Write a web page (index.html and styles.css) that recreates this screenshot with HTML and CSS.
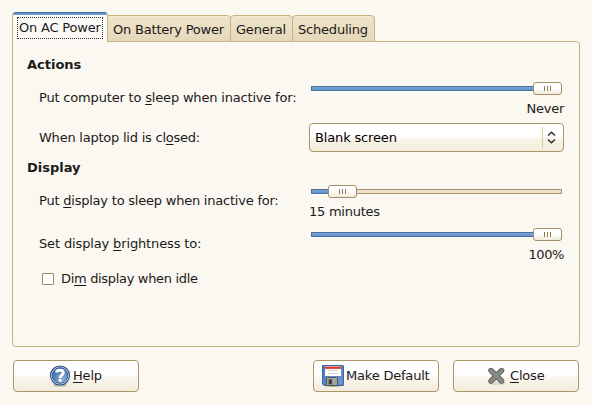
FILE: index.html
```html
<!DOCTYPE html>
<html lang="en">
<head>
<meta charset="utf-8">
<title>Power Management Preferences</title>
<link rel="stylesheet" href="styles.css">
</head>
<body>
<main class="dialog">
  <nav class="tabs">
    <div class="tab tab-active"><span class="focus">On AC Power</span></div>
    <div class="tab tab-battery">On Battery Power</div>
    <div class="tab tab-general">General</div>
    <div class="tab tab-scheduling">Scheduling</div>
  </nav>
  <section class="panel">
    <h2>Actions</h2>
    <div class="row row-sleep">
      <label>Put computer to <u>s</u>leep when inactive for:</label>
      <div class="scale">
        <div class="slider"><div class="fill" style="width:222px"></div><div class="thumb"><i></i><i></i><i></i></div><div class="rest"></div></div>
        <div class="value value-end">Never</div>
      </div>
    </div>
    <div class="row row-lid">
      <label>When laptop lid is cl<u>o</u>sed:</label>
      <div class="combo"><span class="combo-text">Blank screen</span><span class="combo-arrows"><svg width="9" height="13" viewBox="0 0 9 13"><path d="M1 4.6 4.5 1.3 8 4.6M1 8.4 4.5 11.7 8 8.4" fill="none" stroke="#2c2c2c" stroke-width="1.4"/></svg></span></div>
    </div>
    <h2 class="second">Display</h2>
    <div class="row row-display">
      <label>Put <u>d</u>isplay to sleep when inactive for:</label>
      <div class="scale">
        <div class="slider"><div class="fill" style="width:17px"></div><div class="thumb"><i></i><i></i><i></i></div><div class="rest"></div></div>
        <div class="value">15 minutes</div>
      </div>
    </div>
    <div class="row row-bright">
      <label>Set display <u>b</u>rightness to:</label>
      <div class="scale">
        <div class="slider"><div class="fill" style="width:222px"></div><div class="thumb"><i></i><i></i><i></i></div><div class="rest"></div></div>
        <div class="value value-end">100%</div>
      </div>
    </div>
    <div class="check"><span class="box"></span><span>Di<u>m</u> display when idle</span></div>
  </section>
  <footer class="buttons">
    <div class="button help">
      <svg width="22" height="22" viewBox="0 0 22 22">
        <defs><radialGradient id="globe" cx=".65" cy=".75" r=".8"><stop offset="0" stop-color="#8fb0d8"/><stop offset="1" stop-color="#3465a4"/></radialGradient></defs>
        <ellipse cx="11" cy="20" rx="7" ry="1.6" fill="#000" opacity=".25"/>
        <circle cx="11" cy="10.5" r="9.5" fill="#e9eff7" stroke="#2f5590" stroke-width="1.2"/>
        <circle cx="11" cy="10.5" r="7.9" fill="url(#globe)" stroke="#31588f" stroke-width=".8"/>
        <path d="M7.4 7.6C8 4.4 14.4 4.6 14.3 7.9 14.2 10.2 11.1 10.1 11.1 12.9" fill="none" stroke="#fff" stroke-width="2.9"/>
        <rect x="9.6" y="13.9" width="3" height="2.8" rx=".5" fill="#fff"/>
      </svg><span><u>H</u>elp</span>
    </div>
    <div class="button default">
      <svg width="22" height="22" viewBox="0 0 22 22">
        <defs><linearGradient id="disk" x1="0" y1="0" x2="1" y2="1"><stop offset="0" stop-color="#4779bb"/><stop offset="1" stop-color="#739bd3"/></linearGradient></defs>
        <ellipse cx="11" cy="20.7" rx="8" ry="1.2" fill="#000" opacity=".3"/>
        <path d="M1 .6H20.4Q21.4.6 21.4 1.6V19.4Q21.4 20.4 20.4 20.4H2.2L.6 18.8V1Q.6.6 1 .6Z" fill="url(#disk)" stroke="#3465a4" stroke-width="1.1"/>
        <rect x="3" y="1" width="16" height="10" fill="#fff"/>
        <rect x="3" y="1.5" width="16" height="2.4" fill="#df3b2f"/>
        <path d="M6 5.5H16M6 8.5H16" stroke="#d4d4d4"/>
        <rect x="4.5" y="12.5" width="11" height="8" rx=".8" fill="#a4a5a1" stroke="#555753"/>
        <rect x="6.8" y="14.2" width="3.2" height="5" fill="#3a3c38" stroke="#777" stroke-width=".5"/>
      </svg><span>Make Default</span>
    </div>
    <div class="button close">
      <svg width="22" height="22" viewBox="0 0 22 22">
        <ellipse cx="11" cy="18.2" rx="9" ry="1.8" fill="#000" opacity=".1"/>
        <path d="M5 5.5 15.6 16M15.6 5.5 5 16" stroke="#5c5e5a" stroke-width="5.4" stroke-linecap="round"/>
        <path d="M5 5.5 15.6 16M15.6 5.5 5 16" stroke="#888a85" stroke-width="3.6" stroke-linecap="round"/>
      </svg><span><u>C</u>lose</span>
    </div>
  </footer>
</main>
</body>
</html>
```
FILE: styles.css
```css
* { box-sizing: border-box; }
body {
  margin: 0;
  background: #fbf8f1;
  color: #1a1a1a;
  font: 13px/18px "DejaVu Sans", sans-serif;
}
.dialog { width: 592px; height: 405px; padding: 12px 12px 0; overflow: hidden; }
u { text-decoration: underline; text-decoration-thickness: 1px; text-underline-offset: 2px; text-decoration-skip-ink: none; }
.tabs { display: flex; align-items: flex-end; height: 30px; margin-bottom: -1px; position: relative; }
.tab {
  height: 27px;
  margin-left: -1px;
  padding: 5px 0 0 5px;
  border: 1px solid #c8b37e;
  border-radius: 4px 4px 0 0;
  background: linear-gradient(#efe4cb, #e5d8ba);
  box-shadow: inset 0 1px #f4ecd9;
  white-space: nowrap;
  letter-spacing: -0.2px;
}
.tab-active {
  width: 96px;
  height: 30px;
  margin-left: 0;
  padding: 2px 4px 0;
  border-top: 1px solid #406796;
  border-bottom: 0;
  background: linear-gradient(#6b9ad0 2px, #fdfcfa 2px, #fbf8f1);
  box-shadow: none;
}
.focus { display: block; height: 22px; margin-top: 2px; border: 1px dotted #333; line-height: 20px; text-indent: 1px; letter-spacing: -0.2px; }
.tab-battery { width: 124px; border-top-left-radius: 0; }
.tab-general { width: 63px; }
.tab-scheduling { width: 83px; }
.panel {
  width: 568px;
  height: 306px;
  padding: 14px 15px 0 14px;
  border: 1px solid #c8b37e;
  border-radius: 0 4px 4px 4px;
  box-shadow: inset 0 1px #fefdfb;
}
h2 { margin: 0; font-size: 13px; line-height: 18px; }
.second { margin-top: 7px; }
.row { display: grid; grid-template-columns: 270px 256px; align-items: center; padding-left: 12px; }
.row-sleep { height: 40px; margin-top: 4px; }
.row-lid { height: 29px; margin-top: 5px; }
.row-display { height: 40px; margin-top: 4px; }
.row-bright { height: 40px; margin-top: 3px; }
.row-sleep label { letter-spacing: -0.18px; }
.row-lid label { letter-spacing: -0.23px; }
.row-display label { letter-spacing: -0.22px; }
.row-bright label { letter-spacing: -0.14px; }
.slider { display: flex; align-items: center; height: 21px; padding: 0 3px 0 2px; }
.fill, .rest { height: 5px; border: 1px solid #4a6f9f; }
.fill { border-right: 0; background: linear-gradient(#7aa5da, #6193cb); }
.rest { flex: 1; min-width: 0; border-color: #a39068; border-left: 0; background: #efe2cc; }
.rest, .fill { box-shadow: 0 1px #fff; }
.row-sleep .rest, .row-bright .rest { display: none; }
.thumb {
  display: flex;
  gap: 2px;
  align-items: center;
  justify-content: center;
  width: 29px;
  height: 13px;
  border: 1px solid #a39068;
  border-radius: 3px;
  background: linear-gradient(#fff 45%, #f0ead9);
}
.thumb i { width: 1px; height: 5px; background: #8f7c4e; }
.value { height: 19px; line-height: 19px; letter-spacing: -0.25px; }
.value-end { padding-right: 1px; text-align: right; }
.row-bright .value { letter-spacing: -0.4px; }
.combo {
  display: flex;
  align-items: center;
  width: 255px;
  height: 29px;
  padding-left: 5px;
  border: 1px solid #a8966a;
  border-radius: 4px;
  background: linear-gradient(#fff 45%, #f9f5ec 55%, #f3ebd9);
}
.combo-text { flex: 1; color: #000; letter-spacing: -0.15px; }
.combo-arrows { display: flex; align-items: center; width: 21px; height: 21px; padding-left: 4px; border-left: 1px solid #dccb9f; }
.check { display: flex; align-items: center; gap: 7px; height: 20px; margin-top: 5px; padding-left: 15px; letter-spacing: -0.32px; }
.box { width: 12px; height: 12px; border: 1px solid #a08d5c; border-radius: 1px; background: #fff; }
.buttons { display: flex; justify-content: space-between; margin-top: 13px; padding: 0 1px; }
.button {
  display: flex;
  align-items: center;
  width: 126px;
  height: 32px;
  border: 1px solid #a8966a;
  border-radius: 4px;
  background: linear-gradient(#fff 45%, #faf7f0 55%, #f3ebd9);
  letter-spacing: -0.2px;
}
.button svg { margin-right: 2px; }
.help { padding-left: 35px; margin-right: 160px; }
.default { padding-left: 8px; }
.close { padding-left: 32px; }
```
